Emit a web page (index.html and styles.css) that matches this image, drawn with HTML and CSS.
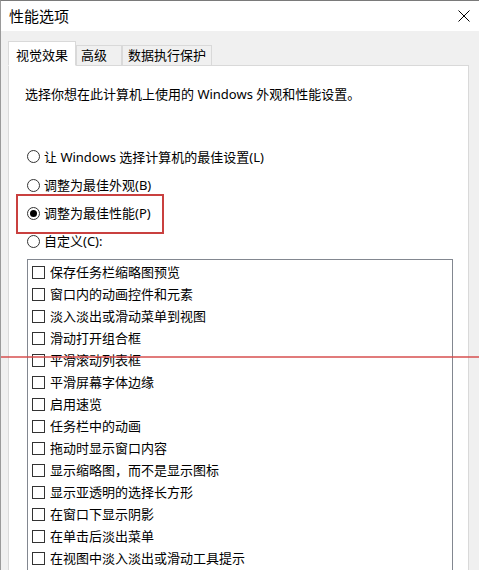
FILE: index.html
```html
<!DOCTYPE html>
<html lang="zh-CN">
<head>
<meta charset="utf-8">
<title>性能选项</title>
<link rel="stylesheet" href="styles.css">
</head>
<body>
<div class="window">
  <div class="titlebar">
    <span class="title">性能选项</span>
    <svg class="close" width="12" height="12" viewBox="0 0 12 12"><path d="M0.5 0.5 L11.5 11.5 M11.5 0.5 L0.5 11.5" stroke="#000" stroke-width="1" fill="none"/></svg>
  </div>
  <div class="tabstrip">
    <div class="tab tab-1 active">视觉效果</div>
    <div class="tab tab-2">高级</div>
    <div class="tab tab-3">数据执行保护</div>
  </div>
  <div class="panel">
    <p class="desc">选择你想在此计算机上使用的 Windows 外观和性能设置。</p>
    <div class="radios">
      <div class="radio-row"><span class="radio"></span>让 Windows 选择计算机的最佳设置(L)</div>
      <div class="radio-row"><span class="radio"></span>调整为最佳外观(B)</div>
      <div class="radio-row marked"><span class="radio checked"></span>调整为最佳性能(P)<span class="mark"></span></div>
      <div class="radio-row"><span class="radio"></span>自定义(C):</div>
    </div>
    <div class="listbox">
      <div class="item"><span class="check"></span>保存任务栏缩略图预览</div>
      <div class="item"><span class="check"></span>窗口内的动画控件和元素</div>
      <div class="item"><span class="check"></span>淡入淡出或滑动菜单到视图</div>
      <div class="item"><span class="check"></span>滑动打开组合框</div>
      <div class="item"><span class="check"></span>平滑滚动列表框</div>
      <div class="item"><span class="check"></span>平滑屏幕字体边缘</div>
      <div class="item"><span class="check"></span>启用速览</div>
      <div class="item"><span class="check"></span>任务栏中的动画</div>
      <div class="item"><span class="check"></span>拖动时显示窗口内容</div>
      <div class="item"><span class="check"></span>显示缩略图，而不是显示图标</div>
      <div class="item"><span class="check"></span>显示亚透明的选择长方形</div>
      <div class="item"><span class="check"></span>在窗口下显示阴影</div>
      <div class="item"><span class="check"></span>在单击后淡出菜单</div>
      <div class="item"><span class="check"></span>在视图中淡入淡出或滑动工具提示</div>
    </div>
  </div>
  <div class="redline"></div>
</div>
</body>
</html>
```
FILE: styles.css
```css
html, body {
  margin: 0;
  padding: 0;
}
body {
  width: 479px;
  height: 570px;
  overflow: hidden;
  background: #f0f0f0;
  font-family: "Noto Sans", "Noto Sans CJK SC", sans-serif;
  color: #000;
}
.window {
  position: relative;
  box-sizing: border-box;
  height: 570px;
  border-top: 1px solid #7a7a7a;
  border-left: 1px solid #9a9a9a;
  overflow: hidden;
}
.titlebar {
  height: 30px;
  background: #fff;
  display: flex;
  align-items: center;
  justify-content: space-between;
  padding-left: 8px;
}
.title {
  font-size: 15px;
  line-height: 30px;
}
.close {
  margin-right: 9px;
  margin-top: -1px;
}
.tabstrip {
  display: flex;
  align-items: flex-end;
  padding: 10px 0 0 7px;
  margin-bottom: -1px;
  position: relative;
  z-index: 1;
}
.tab {
  box-sizing: border-box;
  height: 21px;
  border: 1px solid #d9d9d9;
  background: #f0f0f0;
  font-size: 13px;
  line-height: 19px;
  white-space: nowrap;
}
.tab.active {
  height: 25px;
  padding-top: 4px;
  background: #fff;
  border-bottom-color: #fff;
}
.tab-1 { width: 68px; padding-left: 7px; }
.tab-2 { width: 46px; padding-left: 4px; }
.tab-3 { width: 90px; padding-left: 5px; }
.panel {
  box-sizing: border-box;
  margin-left: 7px;
  width: 461px;
  height: 520px;
  background: #fff;
  border: 1px solid #d9d9d9;
  padding: 19px 16px 0;
}
.desc {
  margin: 0;
  font-size: 13px;
  line-height: 18px;
}
.radios {
  margin-top: 39px;
}
.radio-row {
  position: relative;
  display: flex;
  align-items: center;
  height: 28px;
  font-size: 13px;
  line-height: 18px;
  white-space: nowrap;
}
.radio-row:first-child {
  height: 29px;
}
.radio {
  box-sizing: border-box;
  width: 13px;
  height: 13px;
  margin-left: 2px;
  margin-right: 4px;
  border: 1px solid #333;
  border-radius: 50%;
  background: #fff;
  display: flex;
  align-items: center;
  justify-content: center;
}
.radio.checked::after {
  content: "";
  width: 7px;
  height: 7px;
  border-radius: 50%;
  background: #000;
}
.mark {
  position: absolute;
  left: -9px;
  top: -5px;
  width: 148px;
  height: 40px;
  box-sizing: border-box;
  border: 2px solid #c9403f;
}
.listbox {
  margin-top: 4px;
  margin-left: 2px;
  width: 426px;
  height: 400px;
  box-sizing: border-box;
  border: 1px solid #828790;
  padding-top: 1px;
}
.item {
  display: flex;
  align-items: center;
  height: 22px;
  padding-left: 4px;
  font-size: 13px;
  line-height: 18px;
  white-space: nowrap;
}
.check {
  box-sizing: border-box;
  width: 13px;
  height: 13px;
  margin-right: 5px;
  border: 1px solid #333;
  background: #fff;
}
.redline {
  position: absolute;
  left: -1px;
  top: 355px;
  width: 480px;
  height: 2px;
  background: rgba(214, 72, 72, 0.72);
}
```
